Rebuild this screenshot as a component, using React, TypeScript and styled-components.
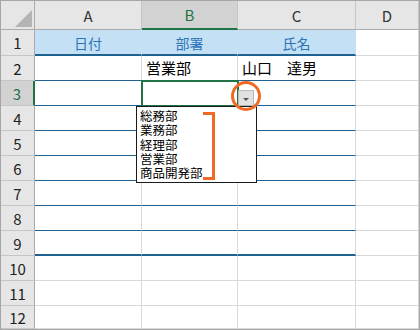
import React from "react";
import styled, { createGlobalStyle, css } from "styled-components";

const GlobalStyle = createGlobalStyle`
    html, body {
        margin: 0;
        padding: 0;
        background: #ffffff;
        overflow: hidden;
    }
    body {
        font-family: "Noto Sans CJK JP", "Noto Sans", sans-serif;
    }
`;

const GREEN = "#217346";
const BLUE_LINE = "#1f6191";
const GRID = "#d9d9d9";
const ORANGE = "#f06a26";

const Sheet = styled.div`
    box-sizing: border-box;
    width: 420px;
    height: 330px;
    border: 1px solid #a6a6a6;
    display: grid;
    grid-template-columns: 34px 107px 96px 118px 1fr;
    grid-template-rows: 29px 26px repeat(10, 25px) 1fr;
    overflow: hidden;
`;

const Corner = styled.div`
    box-sizing: border-box;
    background: #e6e6e6;
    border-right: 1px solid #ababab;
    border-bottom: 1px solid #ababab;
    display: flex;
    align-items: flex-end;
    justify-content: flex-end;
    padding: 2px;
    &::after {
        content: "";
        width: 0;
        height: 0;
        border-left: 17px solid transparent;
        border-bottom: 17px solid #b4b4b4;
    }
`;

const ColHead = styled.div<{ $selected?: boolean }>`
    box-sizing: border-box;
    display: flex;
    align-items: center;
    justify-content: center;
    font-size: 15px;
    color: #333;
    background: #e6e6e6;
    border-right: 1px solid #c6c6c6;
    border-bottom: 1px solid #ababab;
    ${p => p.$selected && css`
        background: #d2d2d2;
        color: ${GREEN};
        border-bottom: 2px solid ${GREEN};
    `}
`;

const RowHead = styled.div<{ $selected?: boolean }>`
    box-sizing: border-box;
    display: flex;
    align-items: center;
    justify-content: center;
    font-size: 15px;
    color: #222;
    background: #e6e6e6;
    border-right: 1px solid #ababab;
    border-bottom: 1px solid #c6c6c6;
    ${p => p.$selected && css`
        background: #d2d2d2;
        color: ${GREEN};
        border-right: 2px solid ${GREEN};
    `}
`;

type Line = "none" | "thin" | "thick";

const Cell = styled.div<{ $line?: Line; $title?: boolean; $active?: boolean }>`
    box-sizing: border-box;
    position: relative;
    display: flex;
    align-items: flex-end;
    padding: 0 0 2px 4px;
    font-size: 15px;
    line-height: 20px;
    color: #000;
    white-space: nowrap;
    border-right: 1px solid ${GRID};
    border-bottom: ${p =>
        p.$line === "thick" ? `2px solid ${BLUE_LINE}` :
        p.$line === "thin" ? `1px solid ${BLUE_LINE}` : `1px solid ${GRID}`};
    ${p => p.$title && css`
        background: #c3e0f5;
        border-right-color: #c3e0f5;
        color: #2e75b6;
        font-size: 14px;
        align-items: center;
        justify-content: center;
        padding: 1px 0 0;
    `}
    ${p => p.$active && css`
        outline: 2px solid ${GREEN};
        outline-offset: -1px;
        z-index: 2;
    `}
`;

const DropButton = styled.div`
    position: absolute;
    left: 96px;
    top: 9px;
    width: 16px;
    height: 16px;
    box-sizing: border-box;
    background: #e1e1e1;
    border: 1px solid #b9b9b9;
    display: flex;
    align-items: center;
    justify-content: center;
    &::after {
        content: "";
        width: 0;
        height: 0;
        margin-top: 2px;
        border-left: 3px solid transparent;
        border-right: 3px solid transparent;
        border-top: 3px solid #555;
    }
`;

const Ring = styled.div`
    position: absolute;
    left: 89px;
    top: 0;
    width: 30px;
    height: 30px;
    box-sizing: border-box;
    border: 3px solid ${ORANGE};
    border-radius: 50%;
    z-index: 4;
`;

const DropList = styled.ul`
    position: absolute;
    left: -6px;
    top: 25px;
    width: 121px;
    height: 77px;
    box-sizing: border-box;
    margin: 0;
    padding: 2px 0 0 3px;
    list-style: none;
    background: #fff;
    border: 1px solid #1a1a1a;
    z-index: 3;
    display: flex;
    flex-direction: column;
`;

const DropItem = styled.li`
    height: 14.3px;
    font-size: 12.5px;
    line-height: 14.3px;
    color: #000;
    overflow: visible;
`;

const Bracket = styled.div`
    position: absolute;
    left: 66px;
    top: 5px;
    width: 12px;
    height: 68px;
    box-sizing: border-box;
    border: 3px solid ${ORANGE};
    border-left: none;
`;

const columns = ["A", "B", "C", "D"];
const titles = ["日付", "部署", "氏名"];
const options = ["総務部", "業務部", "経理部", "営業部", "商品開発部"];

function lineFor(row: number): Line {
    if (row === 1 || row === 9) return "thick";
    if (row >= 2 && row <= 8) return "thin";
    return "none";
}

function cellText(row: number, col: number): string {
    if (row === 2 && col === 1) return "営業部";
    if (row === 2 && col === 2) return "山口　達男";
    return "";
}

export default function App() {
    const rows = Array.from({ length: 12 }, (_, i) => i + 1);
    return (
        <>
            <GlobalStyle />
            <Sheet>
                <Corner />
                {columns.map(c => (
                    <ColHead key={c} $selected={c === "B"}>{c}</ColHead>
                ))}
                {rows.map(r => (
                    <React.Fragment key={r}>
                        <RowHead $selected={r === 3}>{r}</RowHead>
                        {columns.map((c, ci) => {
                            const inTable = ci < 3;
                            const active = r === 3 && ci === 1;
                            return (
                                <Cell
                                    key={c}
                                    $line={inTable ? lineFor(r) : "none"}
                                    $title={inTable && r === 1}
                                    $active={active}
                                >
                                    {inTable && r === 1 ? titles[ci] : cellText(r, ci)}
                                    {active && (
                                        <>
                                            <DropButton />
                                            <Ring />
                                            <DropList>
                                                {options.map(o => (
                                                    <DropItem key={o}>{o}</DropItem>
                                                ))}
                                                <Bracket />
                                            </DropList>
                                        </>
                                    )}
                                </Cell>
                            );
                        })}
                    </React.Fragment>
                ))}
            </Sheet>
        </>
    );
}
